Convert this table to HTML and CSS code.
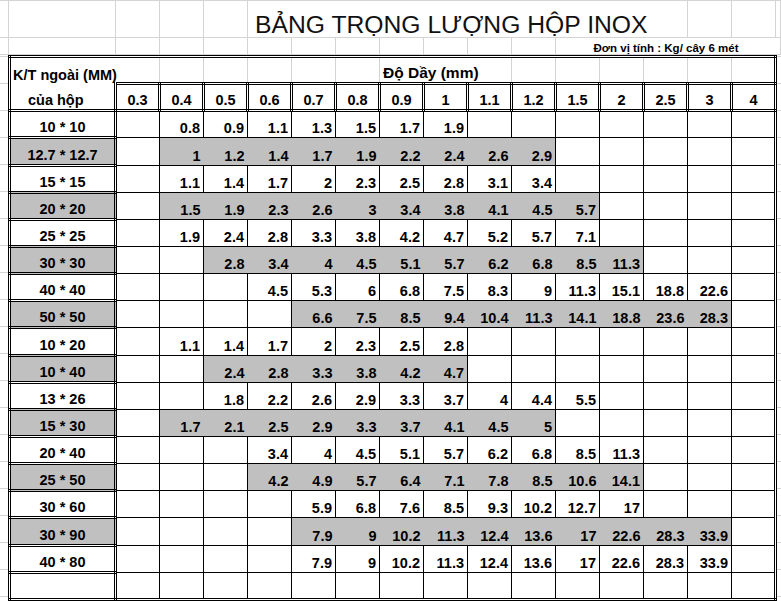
FILE: index.html
```html
<!DOCTYPE html>
<html lang="vi">
<head>
<meta charset="utf-8">
<title>Bảng trọng lượng hộp inox</title>
<link rel="stylesheet" href="styles.css">
</head>
<body>
<div class="top">
  <div class="gc"></div><div class="gc"></div><div class="gc"></div><div class="gc"></div><div class="gc"></div>
  <div class="title">BẢNG TRỌNG LƯỢNG HỘP INOX</div>
  <div class="gc"></div><div class="gc"></div><div class="gc"></div><div class="gc"></div>
  <div class="gc"></div><div class="gc"></div><div class="gc"></div><div class="gc"></div><div class="gc"></div><div class="gc"></div>
  <div class="gc"></div><div class="gc"></div><div class="gc"></div><div class="gc"></div><div class="gc"></div><div class="gc"></div>
  <div class="unit">Đơn vị tính : Kg/ cây 6 mét</div>
  <div class="gc"></div>
</div>
<div class="main">
<table class="grid">
  <colgroup>
    <col class="c-lbl">
    <col class="c-d"><col class="c-d"><col class="c-d"><col class="c-d"><col class="c-d">
    <col class="c-d"><col class="c-d"><col class="c-d"><col class="c-d"><col class="c-d">
    <col class="c-d"><col class="c-d"><col class="c-d"><col class="c-d"><col class="c-d">
  </colgroup>
  <tr class="r1">
    <td class="kt">K/T ngoài (MM)</td>
    <td class="gl"></td><td class="gl"></td><td class="gl"></td><td class="gl"></td><td class="gl"></td><td class="gl"></td>
    <td class="dd">Độ Dầy (mm)</td><td></td>
    <td class="gl"></td><td class="gl"></td><td class="gl"></td><td class="gl"></td><td class="gl"></td><td class="gl"></td><td></td>
  </tr>
  <tr>
    <td class="sub">của hộp</td>
    <td class="hv">0.3</td><td class="hv">0.4</td><td class="hv">0.5</td><td class="hv">0.6</td><td class="hv">0.7</td>
    <td class="hv">0.8</td><td class="hv">0.9</td><td class="hv">1</td><td class="hv">1.1</td><td class="hv">1.2</td>
    <td class="hv">1.5</td><td class="hv">2</td><td class="hv">2.5</td><td class="hv">3</td><td class="hv">4</td>
  </tr>
  <tr>
    <td class="lb">10 * 10</td>
    <td></td><td>0.8</td><td>0.9</td><td>1.1</td><td>1.3</td><td>1.5</td><td>1.7</td><td>1.9</td>
    <td></td><td></td><td></td><td></td><td></td><td></td><td></td>
  </tr>
  <tr>
    <td class="lb g">12.7 * 12.7</td>
    <td></td><td class="g">1</td><td class="g">1.2</td><td class="g">1.4</td><td class="g">1.7</td><td class="g">1.9</td><td class="g">2.2</td><td class="g">2.4</td><td class="g">2.6</td><td class="g">2.9</td>
    <td></td><td></td><td></td><td></td><td></td>
  </tr>
  <tr>
    <td class="lb">15 * 15</td>
    <td></td><td>1.1</td><td>1.4</td><td>1.7</td><td>2</td><td>2.3</td><td>2.5</td><td>2.8</td><td>3.1</td><td>3.4</td>
    <td></td><td></td><td></td><td></td><td></td>
  </tr>
  <tr>
    <td class="lb g">20 * 20</td>
    <td></td><td class="g">1.5</td><td class="g">1.9</td><td class="g">2.3</td><td class="g">2.6</td><td class="g">3</td><td class="g">3.4</td><td class="g">3.8</td><td class="g">4.1</td><td class="g">4.5</td><td class="g">5.7</td>
    <td></td><td></td><td></td><td></td>
  </tr>
  <tr>
    <td class="lb">25 * 25</td>
    <td></td><td>1.9</td><td>2.4</td><td>2.8</td><td>3.3</td><td>3.8</td><td>4.2</td><td>4.7</td><td>5.2</td><td>5.7</td><td>7.1</td>
    <td></td><td></td><td></td><td></td>
  </tr>
  <tr>
    <td class="lb g">30 * 30</td>
    <td></td><td></td><td class="g">2.8</td><td class="g">3.4</td><td class="g">4</td><td class="g">4.5</td><td class="g">5.1</td><td class="g">5.7</td><td class="g">6.2</td><td class="g">6.8</td><td class="g">8.5</td><td class="g">11.3</td>
    <td></td><td></td><td></td>
  </tr>
  <tr>
    <td class="lb">40 * 40</td>
    <td></td><td></td><td></td><td>4.5</td><td>5.3</td><td>6</td><td>6.8</td><td>7.5</td><td>8.3</td><td>9</td><td>11.3</td><td>15.1</td><td>18.8</td><td>22.6</td>
    <td></td>
  </tr>
  <tr>
    <td class="lb g">50 * 50</td>
    <td></td><td></td><td></td><td></td><td class="g">6.6</td><td class="g">7.5</td><td class="g">8.5</td><td class="g">9.4</td><td class="g">10.4</td><td class="g">11.3</td><td class="g">14.1</td><td class="g">18.8</td><td class="g">23.6</td><td class="g">28.3</td>
    <td></td>
  </tr>
  <tr>
    <td class="lb">10 * 20</td>
    <td></td><td>1.1</td><td>1.4</td><td>1.7</td><td>2</td><td>2.3</td><td>2.5</td><td>2.8</td>
    <td></td><td></td><td></td><td></td><td></td><td></td><td></td>
  </tr>
  <tr>
    <td class="lb g">10 * 40</td>
    <td></td><td></td><td class="g">2.4</td><td class="g">2.8</td><td class="g">3.3</td><td class="g">3.8</td><td class="g">4.2</td><td class="g">4.7</td>
    <td></td><td></td><td></td><td></td><td></td><td></td><td></td>
  </tr>
  <tr>
    <td class="lb">13 * 26</td>
    <td></td><td></td><td>1.8</td><td>2.2</td><td>2.6</td><td>2.9</td><td>3.3</td><td>3.7</td><td>4</td><td>4.4</td><td>5.5</td>
    <td></td><td></td><td></td><td></td>
  </tr>
  <tr>
    <td class="lb g">15 * 30</td>
    <td></td><td class="g">1.7</td><td class="g">2.1</td><td class="g">2.5</td><td class="g">2.9</td><td class="g">3.3</td><td class="g">3.7</td><td class="g">4.1</td><td class="g">4.5</td><td class="g">5</td>
    <td></td><td></td><td></td><td></td><td></td>
  </tr>
  <tr>
    <td class="lb">20 * 40</td>
    <td></td><td></td><td></td><td>3.4</td><td>4</td><td>4.5</td><td>5.1</td><td>5.7</td><td>6.2</td><td>6.8</td><td>8.5</td><td>11.3</td>
    <td></td><td></td><td></td>
  </tr>
  <tr>
    <td class="lb g">25 * 50</td>
    <td></td><td></td><td></td><td class="g">4.2</td><td class="g">4.9</td><td class="g">5.7</td><td class="g">6.4</td><td class="g">7.1</td><td class="g">7.8</td><td class="g">8.5</td><td class="g">10.6</td><td class="g">14.1</td>
    <td></td><td></td><td></td>
  </tr>
  <tr>
    <td class="lb">30 * 60</td>
    <td></td><td></td><td></td><td></td><td>5.9</td><td>6.8</td><td>7.6</td><td>8.5</td><td>9.3</td><td>10.2</td><td>12.7</td><td>17</td>
    <td></td><td></td><td></td>
  </tr>
  <tr>
    <td class="lb g">30 * 90</td>
    <td></td><td></td><td></td><td></td><td class="g">7.9</td><td class="g">9</td><td class="g">10.2</td><td class="g">11.3</td><td class="g">12.4</td><td class="g">13.6</td><td class="g">17</td><td class="g">22.6</td><td class="g">28.3</td><td class="g">33.9</td>
    <td></td>
  </tr>
  <tr>
    <td class="lb">40 * 80</td>
    <td></td><td></td><td></td><td></td><td>7.9</td><td>9</td><td>10.2</td><td>11.3</td><td>12.4</td><td>13.6</td><td>17</td><td>22.6</td><td>28.3</td><td>33.9</td>
    <td></td>
  </tr>
  <tr>
    <td class="lb"></td>
    <td></td><td></td><td></td><td></td><td></td><td></td><td></td><td></td><td></td><td></td><td></td><td></td><td></td><td></td><td></td>
  </tr>
</table>
</div>
</body>
</html>
```

FILE: styles.css
```css
html, body {
  margin: 0;
  padding: 0;
  background: #fff;
}

body {
  width: 781px;
  height: 601px;
  overflow: hidden;
  font-family: "Liberation Sans", Arial, sans-serif;
  color: #000;
}

/* spreadsheet gridlines above the table */
.top {
  display: grid;
  grid-template-columns: 9px 107px repeat(15, 44px) 1fr;
  grid-template-rows: 37px 17px;
  border-top: 1px solid #d4d4d4;
}

.gc {
  border-right: 1px solid #d4d4d4;
  border-bottom: 1px solid #d4d4d4;
}

.title {
  grid-column: span 9;
  border-bottom: 1px solid #d4d4d4;
  font-size: 24.7px;
  line-height: 25px;
  padding-top: 11px;
  padding-left: 7px;
  text-align: center;
  white-space: nowrap;
  color: #111;
}

.unit {
  grid-column: span 5;
  border-bottom: 1px solid #d4d4d4;
  font-size: 11.5px;
  font-weight: bold;
  line-height: 14px;
  padding-top: 3px;
  text-align: center;
  white-space: nowrap;
}

.main {
  display: flex;
  padding-left: 8px;
  background: repeating-linear-gradient(to bottom, #d4d4d4 0 1px, transparent 1px 27px);
  background-position: 0 1px;
  height: 546px;
}

.grid {
  border-collapse: collapse;
  table-layout: fixed;
  width: 769px;
  border: 3px double #000;
  background: #fff;
  font-size: 14.5px;
  font-weight: bold;
  line-height: 16px;
}

.c-lbl { width: 106px; }
.c-d { width: 44px; }

.grid tr { height: 27px; }

.grid td {
  padding: 0 3px 1px 2px;
  vertical-align: bottom;
  text-align: right;
  white-space: nowrap;
  overflow: visible;
  border: 1px solid #000;
}

.grid td.g {
  border: none;
  background: #c0c0c0;
}

.grid td.lb {
  border: 3px double #000;
  text-align: center;
  padding: 0 0 1px 0;
}

.grid td.lb.g {
  border: 3px double #000;
  background: #c0c0c0;
}

.grid td.hv {
  border: 3px double #000;
  text-align: center;
  padding: 0 0 1px 0;
}

.grid td.sub {
  border: 3px double #000;
  border-top: none;
  text-align: left;
  padding-left: 17px;
}

.grid tr.r1 td {
  border: none;
  text-align: left;
}

.grid tr.r1 td.gl {
  border-right: 1px solid #d4d4d4;
}

.grid tr.r1 td.kt {
  padding-left: 2px;
}

.grid tr.r1 td.dd {
  padding-left: 3px;
  font-size: 15.5px;
}
```
